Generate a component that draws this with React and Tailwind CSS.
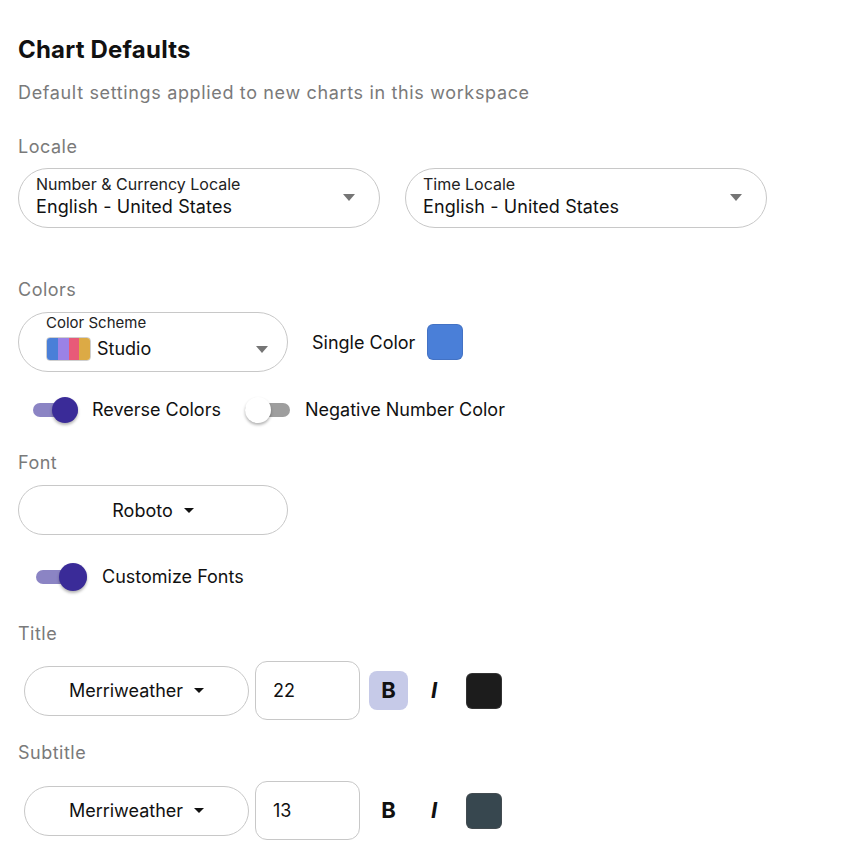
import React from "react";

const font = { fontFamily: "Inter, 'Noto Sans', sans-serif" };

function Caret({ className = "" }) {
  return (
    <svg width="12" height="7" viewBox="0 0 12 7" className={className}>
      <path d="M0 0 L12 0 L6 7 Z" fill="currentColor" />
    </svg>
  );
}

function SmallCaret() {
  return (
    <svg width="10" height="5" viewBox="0 0 10 5">
      <path d="M0 0 L10 0 L5 5 Z" fill="#111" />
    </svg>
  );
}

function Switch({ on, big }) {
  const w = big ? "w-[51px]" : "w-[45px]";
  const h = big ? "h-[28px]" : "h-[26px]";
  const thumb = big ? "w-[28px] h-[28px]" : "w-[26px] h-[26px]";
  return (
    <div className={`relative ${w} ${h} shrink-0`}>
      <div
        className={`absolute left-0 right-0 top-1/2 -translate-y-1/2 h-[14px] rounded-full ${
          on ? "bg-[#8b84c4]" : "bg-[#9e9e9e]"
        }`}
      />
      <div
        className={`absolute top-0 ${thumb} rounded-full shadow-[0_2px_3px_rgba(0,0,0,0.3)] ${
          on ? "right-0 bg-[#3a2b98]" : "left-0 bg-white"
        }`}
      />
    </div>
  );
}

function SectionLabel({ children, className = "" }) {
  return (
    <div className={`text-[18px] leading-[24px] tracking-[0.5px] text-[#7a7a7a] ${className}`}>
      {children}
    </div>
  );
}

function LabeledSelect({ label, value }) {
  return (
    <div className="w-[362px] h-[60px] rounded-full border border-[#c8c8c8] flex items-center pl-[17px] pr-[24px] pb-[3px]">
      <div className="flex-1 flex flex-col">
        <span className="text-[16px] text-[#222] leading-[18px]">{label}</span>
        <span className="mt-[3px] text-[18px] text-[#111] leading-[22px] tracking-[0.1px]">
          {value}
        </span>
      </div>
      <Caret className="text-[#757575] mt-[2px]" />
    </div>
  );
}

function CenterSelect({ value, width }) {
  return (
    <div
      className={`${width} h-[50px] rounded-full border border-[#c8c8c8] flex items-center justify-center gap-[11px]`}
    >
      <span className="text-[18px] text-[#111]">{value}</span>
      <SmallCaret />
    </div>
  );
}

function FontRow({ size, boldActive, swatch }) {
  return (
    <div className="flex items-center pl-[6px]">
      <CenterSelect value="Merriweather" width="w-[225px]" />
      <div className="ml-[6px] w-[105px] h-[59px] rounded-[12px] border border-[#c8c8c8] flex items-center pl-[17px] text-[18px] text-[#111]">
        {size}
      </div>
      <div
        className={`ml-[9px] w-[39px] h-[39px] rounded-[8px] flex items-center justify-center text-[22px] font-bold text-[#111] ${
          boldActive ? "bg-[#c6cae8]" : ""
        }`}
      >
        B
      </div>
      <div className="ml-[7px] w-[38px] h-[38px] flex items-center justify-center text-[22px] font-bold italic text-[#111]">
        I
      </div>
      <div
        className="ml-[13px] w-[36px] h-[36px] rounded-[6px] border border-[#555]/40"
        style={{ background: swatch }}
      />
    </div>
  );
}

export default function App() {
  return (
    <div className="w-[868px] h-[864px] bg-white pl-[18px] pt-[35px]" style={font}>
      <h1 className="text-[24px] font-bold text-[#111] leading-[30px] tracking-[0.2px]">
        Chart Defaults
      </h1>
      <p className="mt-[16px] text-[18px] tracking-[0.65px] text-[#7a7a7a] leading-[24px]">
        Default settings applied to new charts in this workspace
      </p>

      <SectionLabel className="mt-[30px]">Locale</SectionLabel>
      <div className="mt-[9px] flex gap-[25px]">
        <LabeledSelect label="Number & Currency Locale" value="English - United States" />
        <LabeledSelect label="Time Locale" value="English - United States" />
      </div>

      <SectionLabel className="mt-[50px]">Colors</SectionLabel>
      <div className="mt-[10px] flex items-center">
        <div className="w-[270px] h-[60px] rounded-full border border-[#c8c8c8] flex items-center pl-[27px] pr-[19px] pb-[10px]">
          <div className="flex-1 flex flex-col">
            <span className="text-[15px] text-[#222] leading-[18px]">Color Scheme</span>
            <div className="flex items-center mt-[5px] h-[24px]">
              <div className="flex w-[45px] h-[24px] rounded-[4px] overflow-hidden border border-[#888]/40">
                <div className="flex-1 bg-[#4a7fd8]" />
                <div className="flex-1 bg-[#9b82e6]" />
                <div className="flex-1 bg-[#e85a78]" />
                <div className="flex-1 bg-[#dcaa45]" />
              </div>
              <span className="ml-[6px] text-[18px] text-[#111] leading-[24px]">Studio</span>
              <div className="flex-1" />
              <Caret className="text-[#757575] mt-[2px]" />
            </div>
          </div>
        </div>
        <span className="ml-[24px] text-[18px] text-[#111]">Single Color</span>
        <div className="ml-[12px] w-[36px] h-[36px] rounded-[6px] bg-[#4a7fd8] border border-[#3b66b0]/50" />
      </div>

      <div className="mt-[25px] flex items-center pl-[15px]">
        <Switch on />
        <span className="ml-[14px] text-[18px] text-[#111] leading-[24px]">Reverse Colors</span>
        <div className="ml-[24px]">
          <Switch />
        </div>
        <span className="ml-[15px] text-[18px] text-[#111] leading-[24px]">
          Negative Number Color
        </span>
      </div>

      <SectionLabel className="mt-[28px]">Font</SectionLabel>
      <div className="mt-[10px]">
        <CenterSelect value="Roboto" width="w-[270px]" />
      </div>

      <div className="mt-[28px] flex items-center pl-[18px]">
        <Switch on big />
        <span className="ml-[15px] text-[18px] text-[#111] leading-[24px]">Customize Fonts</span>
      </div>

      <SectionLabel className="mt-[31px]">Title</SectionLabel>
      <div className="mt-[15px]">
        <FontRow size="22" boldActive swatch="#1c1c1c" />
      </div>

      <SectionLabel className="mt-[21px]">Subtitle</SectionLabel>
      <div className="mt-[16px]">
        <FontRow size="13" swatch="#37474f" />
      </div>
    </div>
  );
}
